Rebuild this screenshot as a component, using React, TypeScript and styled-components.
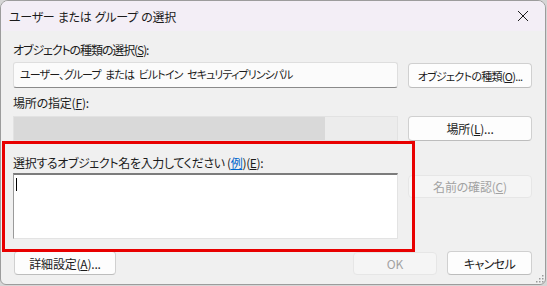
import React from "react";
import styled, { createGlobalStyle } from "styled-components";

const Global = createGlobalStyle`
html, body {
    margin: 0;
    padding: 0;
    background: #d6d6d6;
}
body {
    font-family: "Noto Sans CJK JP", "Noto Sans", sans-serif;
    font-feature-settings: "palt";
    font-size: 12px;
    color: #1b1b1b;
}
`;

const Window = styled.div`
position: relative;
width: 546px;
height: 285px;
box-sizing: border-box;
border: 1px solid #9c9c9c;
border-radius: 8px 8px 6px 6px;
background: #f0f0f0;
overflow: hidden;
display: flex;
flex-direction: column;
`;

const TitleBar = styled.div`
height: 30px;
flex: none;
display: flex;
align-items: center;
justify-content: space-between;
padding: 0 16px 0 8px;
background: #f3eef6;
`;

const Title = styled.span`
font-size: 12px;
letter-spacing: -0.3px;
word-spacing: 1px;
`;

const Close = styled.span`
display: flex;
width: 12px;
height: 12px;
`;

const Body = styled.div`
display: flex;
flex-direction: column;
padding: 0 13px 0 12px;
`;

const Label = styled.div<{ $top: number; $ls?: number }>`
margin-top: ${p => p.$top}px;
height: 16px;
line-height: 16px;
white-space: nowrap;
letter-spacing: ${p => p.$ls ?? -0.2}px;
`;

const Row = styled.div<{ $top: number }>`
margin-top: ${p => p.$top}px;
display: grid;
grid-template-columns: 385px 124px;
column-gap: 10px;
align-items: start;
`;

const Field = styled.div`
height: 26px;
box-sizing: border-box;
border: 1px solid #dedede;
border-bottom-color: #8a8a8a;
border-radius: 3px;
background: #fbfbfb;
padding: 0 6px;
line-height: 23px;
white-space: nowrap;
font-size: 11px;
letter-spacing: -0.9px;
word-spacing: 3px;
`;

const LocationField = styled.div`
height: 25px;
box-sizing: border-box;
border: 1px solid #e2e2e2;
background: #ececec;
display: flex;
`;

const LocationFill = styled.div`
width: 311px;
background: #d9d9d9;
`;

const NameInput = styled.div`
height: 66px;
box-sizing: border-box;
border: 1px solid #e3e3e3;
border-top: 2px solid #7c7c7c;
border-left: 1px solid #9a9a9a;
background: #fff;
padding: 3px 2px;
`;

const Caret = styled.div`
width: 1px;
height: 13px;
background: #000;
`;

const Button = styled.div<{ $w?: number; $h?: number; $disabled?: boolean; $top?: number; $ls?: number; $fs?: number }>`
width: ${p => (p.$w ? p.$w + "px" : "auto")};
height: ${p => p.$h || 25}px;
margin-top: ${p => p.$top || 0}px;
box-sizing: border-box;
border: 1px solid ${p => (p.$disabled ? "#e6e6e6" : "#d0d0d0")};
border-bottom-color: ${p => (p.$disabled ? "#e6e6e6" : "#bdbdbd")};
border-radius: 4px;
background: ${p => (p.$disabled ? "#f5f5f5" : "#fdfdfd")};
color: ${p => (p.$disabled ? "#a2a2a2" : "#1b1b1b")};
display: flex;
align-items: center;
justify-content: center;
white-space: nowrap;
font-size: ${p => p.$fs || 12}px;
letter-spacing: ${p => p.$ls ?? -0.2}px;
`;

const BottomRow = styled.div`
margin-top: 12px;
display: flex;
align-items: center;
gap: 10px;
padding-left: 1px;
`;

const Spacer = styled.div`
flex: 1;
`;

const Link = styled.span`
color: #0066cc;
text-decoration: underline;
`;

const Marker = styled.div`
position: absolute;
left: 1px;
top: 140px;
width: 413px;
height: 111px;
box-sizing: border-box;
border: 3px solid #e80000;
pointer-events: none;
`;

const Grip = styled.svg`
position: absolute;
right: 1px;
bottom: 1px;
`;

const U = ({ c }: { c: string }) => <u>{c}</u>;

export default function App() {
    return <>
        <Global />
        <Window>
            <TitleBar>
                <Title>ユーザー または グループ の選択</Title>
                <Close>
                    <svg width="12" height="12" viewBox="0 0 12 12">
                        <path d="M1 1 L11 11 M11 1 L1 11" stroke="#1b1b1b" strokeWidth="1" />
                    </svg>
                </Close>
            </TitleBar>
            <Body>
                <Label $top={11} $ls={-1.1}>オブジェクトの種類の選択(<U c="S" />):</Label>
                <Row $top={4}>
                    <Field>ユーザー、グループ または ビルトイン セキュリティプリンシパル</Field>
                    <Button $top={1} $fs={11} $ls={-0.7}>オブジェクトの種類(<U c="O" />)...</Button>
                </Row>
                <Label $top={7}>場所の指定(<U c="F" />):</Label>
                <Row $top={5}>
                    <LocationField><LocationFill /></LocationField>
                    <Button>場所(<U c="L" />)...</Button>
                </Row>
                <Label $top={14} $ls={-0.35}>選択するオブジェクト名を入力してください (<Link>例</Link>)(<U c="E" />):</Label>
                <Row $top={2}>
                    <NameInput><Caret /></NameInput>
                    <Button $h={23} $top={2} $disabled>名前の確認(<U c="C" />)</Button>
                </Row>
                <BottomRow>
                    <Button $w={102} $h={24}>詳細設定(<U c="A" />)...</Button>
                    <Spacer />
                    <Button $w={84} $h={23} $disabled>OK</Button>
                    <Button $w={85} $h={24} $ls={-0.6}>キャンセル</Button>
                </BottomRow>
            </Body>
            <Marker />
            <Grip width="8" height="8" viewBox="0 0 8 8">
                <rect x="6" y="0" width="1.5" height="1.5" fill="#9a9a9a" />
                <rect x="3" y="3" width="1.5" height="1.5" fill="#9a9a9a" />
                <rect x="6" y="3" width="1.5" height="1.5" fill="#9a9a9a" />
                <rect x="0" y="6" width="1.5" height="1.5" fill="#9a9a9a" />
                <rect x="3" y="6" width="1.5" height="1.5" fill="#9a9a9a" />
                <rect x="6" y="6" width="1.5" height="1.5" fill="#9a9a9a" />
            </Grip>
        </Window>
    </>;
}
